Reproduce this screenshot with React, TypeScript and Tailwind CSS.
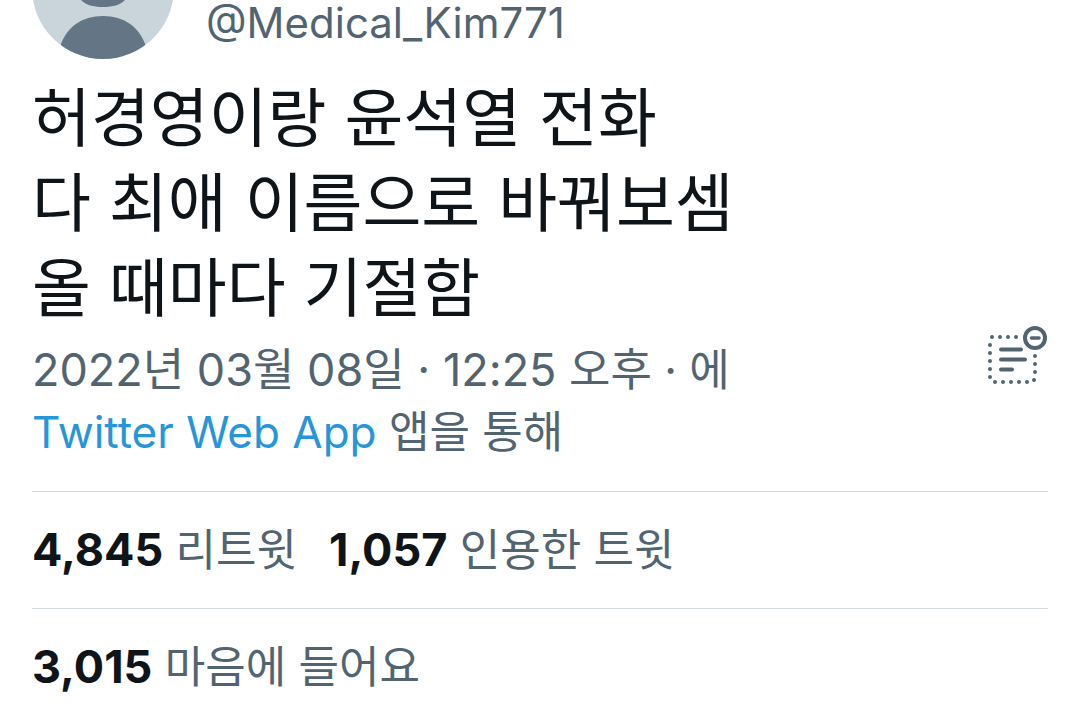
const Avatar = () => (
    <svg viewBox="0 0 142 142" className="h-[142px] w-[142px] shrink-0" aria-label="Medical_Kim771">
        <defs>
            <clipPath id="avatar-circle">
                <circle cx="71" cy="71" r="71" />
            </clipPath>
        </defs>
        <g clipPath="url(#avatar-circle)">
            <rect width="142" height="142" fill="#c9d5db" />
            <path d="M71 28c-18 0-28 13-28 31 0 11 2 19 6 24 5 5 12 7 22 7s17-2 22-7c4-5 6-13 6-24 0-18-10-31-28-31z" fill="#647585" />
            <path d="M28 130C34 110 50 99 71 99s37 11 43 31v12H28z" fill="#647585" />
        </g>
    </svg>
);

const ReaderIcon = () => (
    <svg viewBox="0 0 60 60" className="h-[60px] w-[60px]" fill="none" stroke="#536471" strokeLinecap="round" aria-hidden="true">
        <path d="M4 11H29M2 19V52M7 56H40M47 30V47M46 54H46.01" strokeWidth="4" strokeDasharray="0 8" />
        <path d="M13 23.5H33M13 33.5H37M13 43.5H24" strokeWidth="4" />
        <circle cx="47" cy="12" r="10" strokeWidth="4" />
        <path d="M43.5 12H51" strokeWidth="3.5" />
    </svg>
);

const stats = [
    [
        { count: "4,845", label: "리트윗" },
        { count: "1,057", label: "인용한 트윗" },
    ],
    [{ count: "3,015", label: "마음에 들어요" }],
];

const App = () => {
    return (
        <main className="overflow-hidden bg-white px-8 font-['Inter','Noto_Sans_CJK_KR',sans-serif] text-[#536471]">
            <header className="-mt-[83px] flex items-end gap-8">
                <Avatar />
                <a href="#profile" className="pb-[15px] text-[42px] leading-[42px]">@Medical_Kim771</a>
            </header>

            <p className="mt-4 text-[64px] leading-[85px] text-[#0f1419]">
                허경영이랑 윤석열 전화<br />
                다 최애 이름으로 바꿔보셈<br />
                올 때마다 기절함
            </p>

            <div className="-mt-1 flex items-start justify-between">
                <p className="mt-[13px] text-[44px] leading-[62px]">
                    <time dateTime="2022-03-08T12:25" className="text-[45px]">2022년 03월 08일 · 12:25 오후</time> · 에<br />
                    <a href="#source" className="text-[#2795d9]">Twitter Web App</a> 앱을 통해
                </p>
                <button type="button" aria-label="읽기 모드">
                    <ReaderIcon />
                </button>
            </div>

            <div className="mt-7">
                {stats.map((row, i) => (
                    <div key={i} className="flex gap-8 border-t border-[#d3dcde] py-7 text-[44px] leading-[59px]">
                        {row.map((stat) => (
                            <a key={stat.label} href="#stats">
                                <strong className="text-[45px] font-bold text-[#0f1419]">{stat.count}</strong> {stat.label}
                            </a>
                        ))}
                    </div>
                ))}
            </div>
        </main>
    );
};

export default App;
